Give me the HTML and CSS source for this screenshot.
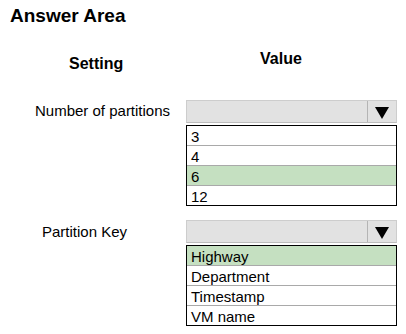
FILE: index.html
```html
<!DOCTYPE html>
<html lang="en">
<head>
  <meta charset="UTF-8" />
  <title>Answer Area</title>
  <link rel="stylesheet" href="styles.css">
</head>
<body>
  <h1 class="title">Answer Area</h1>
  <div class="answer-grid">
    <div class="col-head setting-head">Setting</div>
    <div class="col-head value-head">Value</div>

    <div class="label label-first">Number of partitions</div>
    <div class="dropdown dropdown-first">
      <div class="select">
        <span class="select-value"></span>
        <span class="arrow"></span>
      </div>
      <ul class="options">
        <li>3</li>
        <li>4</li>
        <li class="picked">6</li>
        <li>12</li>
      </ul>
    </div>

    <div class="label label-key">Partition Key</div>
    <div class="dropdown">
      <div class="select">
        <span class="select-value"></span>
        <span class="arrow"></span>
      </div>
      <ul class="options">
        <li class="picked">Highway</li>
        <li>Department</li>
        <li>Timestamp</li>
        <li>VM name</li>
      </ul>
    </div>
  </div>
</body>
</html>
```

FILE: styles.css
```css
/* answer area, exam style */
body { margin: 0; background: #fff; color: #000; font-family: "Liberation Sans", Arial, sans-serif; font-size: 15px; }
.title { margin: 0; padding: 5px 0 0 10px; font-size: 19px; line-height: 21px; font-weight: bold; }

.answer-grid { display: grid; grid-template-columns: 186px 211px; }
.col-head { font-size: 16px; font-weight: bold; line-height: 18px; }
.setting-head { padding: 29px 0 0 69px; }
.value-head { padding: 24px 0 0 74px; }

.label { padding: 2px 0 0 35px; line-height: 17px; white-space: nowrap; }
.label-key { padding: 3px 0 0 42px; margin-top: 14px; }
.dropdown { margin-top: 14px; }
.label.label-first, .dropdown.dropdown-first { margin-top: 27px; }

.select { display: flex; height: 21px; background: #e2e2e2; border: 1px solid #cdcdcd; border-bottom-color: #bdbdbd; }
.select-value { flex: 1; }
.arrow { width: 28px; border-left: 1px solid #b4b4b4; display: flex; align-items: center; justify-content: center; }
.arrow::after { content: ""; border-left: 7px solid transparent; border-right: 7px solid transparent; border-top: 12px solid #000; margin-top: 2px; }

.options { list-style: none; margin: 2px 0 0; padding: 0; border: 1px solid #000; }
.options li { height: 17px; padding: 2px 0 0 4px; line-height: 17px; border-top: 1px solid #a9a9a9; }
.options li:first-child { border-top: none; }
.options li.picked { background: #c5e0c1; }
```
